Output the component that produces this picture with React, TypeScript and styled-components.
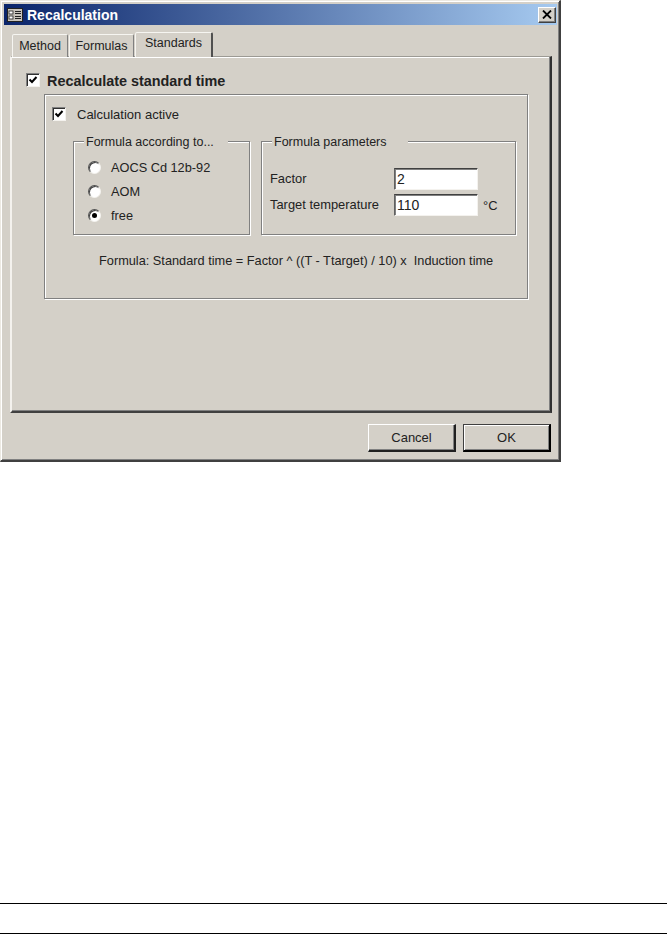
import React from 'react';
import styled, { createGlobalStyle } from 'styled-components';

const GlobalStyle = createGlobalStyle`
  html, body {
    margin: 0;
    padding: 0;
    background: #fff;
  }
  * {
    box-sizing: border-box;
  }
`;

const Page = styled.div`
  width: 667px;
  height: 934px;
  overflow: hidden;
  font-family: "Liberation Sans", Arial, sans-serif;
  font-size: 12px;
  color: #222;
  display: flex;
  flex-direction: column;
`;

const Window = styled.div`
  width: 561px;
  height: 462px;
  padding: 3px 2px 0 3px;
  background: #d4d0c8;
  border-style: solid;
  border-width: 1px 2px 2px 1px;
  border-color: #ece9e2 #404040 #404040 #ece9e2;
  box-shadow: inset 1px 1px 0 #fff, inset -1px -1px 0 #808080;
  display: flex;
  flex-direction: column;
`;

const TitleBar = styled.div`
  height: 21px;
  display: flex;
  align-items: center;
  padding: 0 1px 0 3px;
  gap: 4px;
  background: linear-gradient(90deg, #0a246a, #a6caf0);
  flex-shrink: 0;
`;

const TitleText = styled.div`
  color: #fff;
  font-weight: bold;
  font-size: 14px;
  flex: 1;
`;

const CloseButton = styled.div`
  width: 18px;
  height: 16px;
  display: flex;
  align-items: center;
  justify-content: center;
  background: #d4d0c8;
  border: 1px solid;
  border-color: #fff #404040 #404040 #fff;
  box-shadow: inset -1px -1px 0 #808080;
`;

const TabStrip = styled.div`
  display: flex;
  align-items: flex-end;
  height: 25px;
  margin: 7px 0 0 8px;
  gap: 1px;
  position: relative;
  z-index: 1;
`;

const Tab = styled.div<{ $active?: boolean; $width: number }>`
  width: ${({ $width }) => $width}px;
  height: ${({ $active }) => ($active ? 25 : 23)}px;
  background: #d4d0c8;
  border-style: solid;
  border-color: #f6f5f1 ${({ $active }) => ($active ? '#505050' : '#808080')} transparent #f6f5f1;
  border-width: 1px ${({ $active }) => ($active ? 2 : 1)}px 0 1px;
  border-radius: 2px 2px 0 0;
  text-align: center;
  line-height: ${({ $active }) => ($active ? 21 : 23)}px;
  font-size: 12.5px;
`;

const Panel = styled.div`
  width: 542px;
  height: 357px;
  margin: -1px 0 0 6px;
  padding: 15px 0 0 14px;
  background: #d4d0c8;
  border-style: solid;
  border-width: 1px 2px 2px 2px;
  border-color: #9c9a94 #303030 #404040 #f4f2ee;
  box-shadow: inset -1px -1px 0 #808080, inset 0 1px 0 #fff;
`;

const CheckRow = styled.label<{ $bold?: boolean; $gap: number }>`
  display: flex;
  align-items: center;
  gap: ${({ $gap }) => $gap}px;
  height: 15px;
  font-size: ${({ $bold }) => ($bold ? 14.4 : 13)}px;
  font-weight: ${({ $bold }) => ($bold ? 'bold' : 'normal')};
  white-space: nowrap;
`;

const CheckLabel = styled.span`
  padding-top: 2px;
`;

const CheckBox = styled.span`
  width: 14px;
  height: 14px;
  flex-shrink: 0;
  display: flex;
  align-items: center;
  justify-content: center;
  background: #fff;
  border: 1px solid;
  border-color: #808080 #f4f2ee #f4f2ee #808080;
  box-shadow: inset 1px 1px 0 #303030;
`;

const OuterGroup = styled.div`
  width: 484px;
  height: 205px;
  margin: 7px 0 0 18px;
  padding: 11px 0 0 7px;
  border: 1px solid #808080;
  box-shadow: 1px 1px 0 #fff, inset 1px 1px 0 #fff;
`;

const GroupRow = styled.div`
  display: flex;
  gap: 11px;
  margin: 20px 0 0 21px;
`;

const GroupBox = styled.div<{ $width: number }>`
  position: relative;
  width: ${({ $width }) => $width}px;
  height: 94px;
  border: 1px solid #808080;
  box-shadow: 1px 1px 0 #fff, inset 1px 1px 0 #fff;
`;

const Legend = styled.div<{ $width: number }>`
  position: absolute;
  top: -8px;
  left: 10px;
  width: ${({ $width }) => $width}px;
  height: 16px;
  line-height: 16px;
  padding-left: 2px;
  background: #d4d0c8;
  font-size: 12.5px;
  white-space: nowrap;
`;

const RadioList = styled.div`
  display: flex;
  flex-direction: column;
  gap: 10px;
  padding: 18px 0 0 14px;
`;

const RadioRow = styled.div`
  display: flex;
  align-items: center;
  gap: 10px;
  height: 14px;
  font-size: 12.75px;
`;

const Radio = styled.span<{ $checked?: boolean }>`
  width: 13px;
  height: 13px;
  border-radius: 50%;
  flex-shrink: 0;
  display: flex;
  align-items: center;
  justify-content: center;
  background: #fff;
  border: 1px solid;
  border-color: #505050 #f4f2ee #f4f2ee #505050;
  box-shadow: inset 1px 1px 0 #404040;

  &::after {
    content: '';
    width: 5px;
    height: 5px;
    border-radius: 50%;
    background: ${({ $checked }) => ($checked ? '#000' : 'transparent')};
  }
`;

const ParamGrid = styled.div`
  display: grid;
  grid-template-columns: 124px 84px auto;
  grid-auto-rows: 22px;
  row-gap: 4px;
  align-items: center;
  padding: 26px 0 0 8px;
  font-size: 12.9px;
`;

const ParamLabel = styled.span`
  padding-bottom: 2px;
  white-space: nowrap;
`;

const ValueBox = styled.div`
  height: 22px;
  padding-left: 2px;
  line-height: 20px;
  font-size: 14px;
  background: #fff;
  border: 1px solid;
  border-color: #404040 #f4f2ee #f4f2ee #606060;
  box-shadow: inset 1px 1px 0 #808080;
`;

const Unit = styled.span`
  margin-left: 5px;
`;

const FormulaLine = styled.div`
  margin: 18px 0 0 47px;
  height: 16px;
  line-height: 16px;
  font-size: 12.75px;
  white-space: pre;
`;

const Footer = styled.div`
  display: flex;
  justify-content: flex-end;
  gap: 7px;
  margin-top: 11px;
  padding-right: 6px;
`;

const Button = styled.div<{ $default?: boolean }>`
  width: 88px;
  height: 28px;
  display: flex;
  align-items: center;
  justify-content: center;
  font-size: 13px;
  background: #d4d0c8;
  border-style: solid;
  border-width: 1px 2px 2px 1px;
  border-color: ${({ $default }) =>
    $default ? '#404040 #000 #000 #404040' : '#fff #202020 #202020 #fff'};
  box-shadow: ${({ $default }) =>
    $default ? 'inset 1px 1px 0 #fff, inset -1px -1px 0 #808080' : 'inset -1px -1px 0 #808080'};
`;

const Rule = styled.div<{ $top: number }>`
  height: 1px;
  flex-shrink: 0;
  background: #000;
  margin-top: ${({ $top }) => $top}px;
`;

const FormIcon = () => (
  <svg width="16" height="14" viewBox="0 0 16 14">
    <rect x="0.5" y="0.5" width="15" height="13" fill="#c8c4bc" stroke="#222" />
    <rect x="2" y="3" width="4" height="3" fill="#fff" stroke="#222" strokeWidth="0.8" />
    <rect x="2" y="8" width="4" height="3" fill="#fff" stroke="#222" strokeWidth="0.8" />
    <path d="M8 3h6v1H8zM8 5h6v1H8zM8 8h6v1H8zM8 10h6v1H8z" fill="#222" />
  </svg>
);

const CloseIcon = () => (
  <svg width="10" height="9" viewBox="0 0 10 9">
    <path d="M1 0.5 L9 8.5 M9 0.5 L1 8.5" stroke="#000" strokeWidth="1.8" fill="none" />
  </svg>
);

const CheckIcon = () => (
  <svg width="10" height="10" viewBox="0 0 10 10">
    <path d="M1.5 4.5 L4 7 L8.5 2" stroke="#000" strokeWidth="2" fill="none" />
  </svg>
);

const radios = [
  { label: 'AOCS Cd 12b-92' },
  { label: 'AOM' },
  { label: 'free', checked: true },
];

const App: React.FC = () => (
  <Page>
    <GlobalStyle />
    <Window>
      <TitleBar>
        <FormIcon />
        <TitleText>Recalculation</TitleText>
        <CloseButton>
          <CloseIcon />
        </CloseButton>
      </TitleBar>
      <TabStrip>
        <Tab $width={56}>Method</Tab>
        <Tab $width={65}>Formulas</Tab>
        <Tab $width={78} $active>
          Standards
        </Tab>
      </TabStrip>
      <Panel>
        <CheckRow $bold $gap={7}>
          <CheckBox>
            <CheckIcon />
          </CheckBox>
          <CheckLabel>Recalculate standard time</CheckLabel>
        </CheckRow>
        <OuterGroup>
          <CheckRow $gap={11}>
            <CheckBox>
              <CheckIcon />
            </CheckBox>
            <CheckLabel>Calculation active</CheckLabel>
          </CheckRow>
          <GroupRow>
            <GroupBox $width={177}>
              <Legend $width={144}>Formula according to...</Legend>
              <RadioList>
                {radios.map((radio) => (
                  <RadioRow key={radio.label}>
                    <Radio $checked={radio.checked} />
                    {radio.label}
                  </RadioRow>
                ))}
              </RadioList>
            </GroupBox>
            <GroupBox $width={255}>
              <Legend $width={136}>Formula parameters</Legend>
              <ParamGrid>
                <ParamLabel>Factor</ParamLabel>
                <ValueBox>2</ValueBox>
                <span />
                <ParamLabel>Target temperature</ParamLabel>
                <ValueBox>110</ValueBox>
                <Unit>°C</Unit>
              </ParamGrid>
            </GroupBox>
          </GroupRow>
          <FormulaLine>Formula: Standard time = Factor ^ ((T - Ttarget) / 10) x  Induction time</FormulaLine>
        </OuterGroup>
      </Panel>
      <Footer>
        <Button>Cancel</Button>
        <Button $default>OK</Button>
      </Footer>
    </Window>
    <Rule $top={441} />
    <Rule $top={29} />
  </Page>
);

export default App;
